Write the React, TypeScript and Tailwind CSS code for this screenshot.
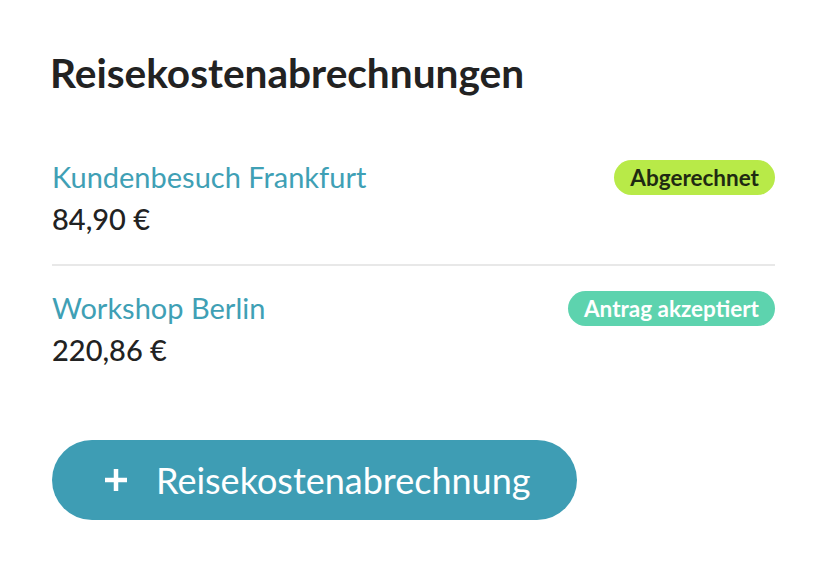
import React from "react";

const items = [
  { title: "Kundenbesuch Frankfurt", amount: "84,90 €", status: "Abgerechnet", badge: "bg-[#b8ea48] text-[#1f2a12]" },
  { title: "Workshop Berlin", amount: "220,86 €", status: "Antrag akzeptiert", badge: "bg-[#5dd3ae] text-white" },
];

const App = () => {
  return (
    <div className="min-h-screen bg-white font-['Lato',sans-serif] text-[#222]">
      <div className="w-[723px] ml-[52px] pt-[48px]">
        <h1 className="-ml-[2px] text-[40.6px] font-bold leading-[50px] text-[#222]">Reisekostenabrechnungen</h1>

        <div className="mt-[60px]">
          {items.map((item, i) => (
            <div key={item.title} className={i > 0 ? "border-t-2 border-[#e8e8e8] pt-[23px]" : ""}>
              <div className="flex items-start justify-between">
                <div className={i > 0 ? "pb-[30px]" : "pb-[26px]"}>
                  <div className="text-[29px] leading-[38px] text-[#3fa0b5]">{item.title}</div>
                  <div className="mt-[4px] text-[29px] font-medium leading-[38px]">{item.amount}</div>
                </div>
                <span className={"mt-[2px] rounded-full px-[16px] text-[22.5px] font-bold leading-[35px] " + item.badge}>
                  {item.status}
                </span>
              </div>
            </div>
          ))}
        </div>

        <button className="mt-[41px] flex h-[80px] w-[525px] items-center rounded-full bg-[#3e9db4] pl-[52px] text-white">
          <svg width="24" height="24" viewBox="0 0 24 24" className="shrink-0">
            <path d="M12 1v22M1 12h22" stroke="white" strokeWidth="4.5" />
          </svg>
          <span className="ml-[28px] text-[36px] leading-[44px]">Reisekostenabrechnung</span>
        </button>
      </div>
    </div>
  );
};

export default App;
